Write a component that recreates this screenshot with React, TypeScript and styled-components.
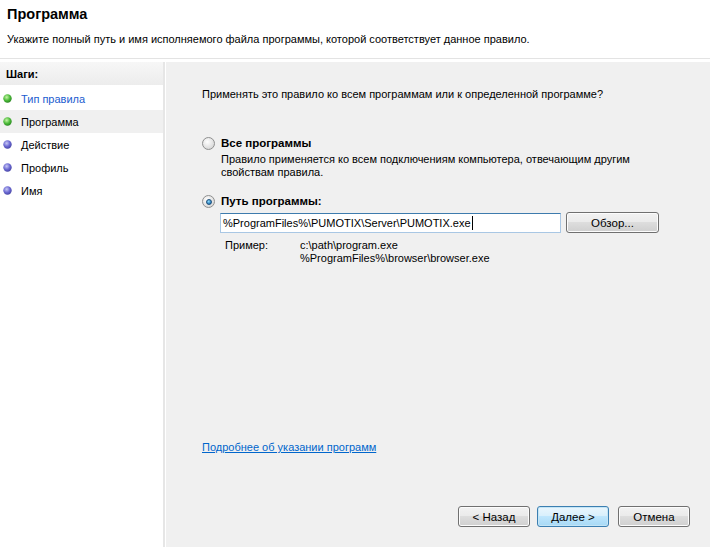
import styled, { createGlobalStyle } from "styled-components";

const GlobalStyle = createGlobalStyle`
  html, body {
    margin: 0;
    padding: 0;
    background: #fff;
  }
  body {
    font-family: "Liberation Sans", Arial, sans-serif;
    font-size: 11px;
    color: #000;
  }
`;

const Window = styled.div`
  width: 710px;
  height: 547px;
  display: flex;
  flex-direction: column;
  background: #fff;
  overflow: hidden;
`;

const Header = styled.div`
  height: 59px;
  padding: 0 7px;
  border-bottom: 1px solid #e3e3e3;
  box-sizing: border-box;
`;

const Title = styled.div`
  font-weight: bold;
  font-size: 14.5px;
  padding-top: 6px;
  line-height: 17px;
`;

const Subtitle = styled.div`
  margin-top: 9px;
  line-height: 14px;
`;

const Body = styled.div`
  flex: 1;
  display: flex;
  padding-top: 3px;
  background: #fff;
  min-height: 0;
`;

const StepsPane = styled.div`
  width: 163px;
  flex-shrink: 0;
  border-right: 2px solid #e6e6e6;
  background: #fff;
`;

const StepsHeader = styled.div`
  height: 23px;
  display: flex;
  align-items: center;
  padding-left: 6px;
  font-weight: bold;
  background: linear-gradient(#f7f7f7, #ececec);
  margin-bottom: 2px;
`;

const StepItem = styled.div<{ $active?: boolean; $link?: boolean }>`
  height: 23px;
  display: flex;
  align-items: center;
  padding-left: 3px;
  gap: 9px;
  background: ${(p) => (p.$active ? "#f0f0f0" : "transparent")};
  color: ${(p) => (p.$link ? "#1c5ccf" : "#000")};
`;

const ContentPane = styled.div`
  flex: 1;
  min-width: 0;
  margin-left: 1px;
  background: #f0f0f0;
  display: flex;
  flex-direction: column;
  padding-left: 36px;
  padding-right: 20px;
`;

const Question = styled.div`
  margin-top: 26px;
  line-height: 13px;
  white-space: nowrap;
`;

const Option = styled.div<{ $gap: number }>`
  display: flex;
  flex-direction: column;
  margin-top: ${(p) => p.$gap}px;
`;

const OptionRow = styled.label`
  display: flex;
  align-items: center;
  gap: 6px;
  line-height: 13px;
  font-weight: bold;
  font-size: 11.5px;
`;

const OptionDesc = styled.div`
  margin-left: 19px;
  margin-top: 3px;
  line-height: 13px;
  width: 480px;
`;

const Radio = styled.span<{ $checked?: boolean }>`
  width: 13px;
  height: 13px;
  border-radius: 50%;
  border: 1px solid #8e8f8f;
  background: radial-gradient(circle at 40% 35%, #ffffff, #d4d4d4 85%);
  display: flex;
  align-items: center;
  justify-content: center;
  box-sizing: border-box;
  flex-shrink: 0;
  &::after {
    content: "";
    display: ${(p) => (p.$checked ? "block" : "none")};
    width: 6px;
    height: 6px;
    border-radius: 50%;
    background: radial-gradient(circle at 40% 35%, #8fdcff, #1a6fb0 80%);
    border: 1px solid #1d4f7a;
    box-sizing: border-box;
  }
`;

const PathRow = styled.div`
  display: flex;
  align-items: center;
  gap: 5px;
  margin-left: 18px;
  margin-top: 4px;
`;

const PathInput = styled.div`
  width: 341px;
  height: 20px;
  box-sizing: border-box;
  background: #fff;
  border: 1px solid #a9c7e4;
  border-top-color: #3d7bad;
  display: flex;
  align-items: center;
  padding-left: 2px;
  white-space: nowrap;
`;

const Caret = styled.span`
  display: inline-block;
  width: 1px;
  height: 14px;
  background: #000;
  margin-left: 1px;
`;

const Button = styled.div<{ $default?: boolean; $width?: number }>`
  width: ${(p) => p.$width ?? 72}px;
  height: 21px;
  box-sizing: border-box;
  border: 1px solid ${(p) => (p.$default ? "#3c7fb1" : "#707070")};
  border-radius: 3px;
  background: ${(p) =>
    p.$default
      ? "linear-gradient(#eaf6fd 0%, #d9f0fc 45%, #bee6fd 50%, #a7d9f5 100%)"
      : "linear-gradient(#f2f2f2 0%, #ebebeb 45%, #dddddd 50%, #cfcfcf 100%)"};
  box-shadow: inset 0 0 0 1px ${(p) => (p.$default ? "#c4e5f6" : "#fcfcfc")};
  display: flex;
  align-items: center;
  justify-content: center;
  font-size: 11.5px;
`;

const CancelButton = styled(Button)`
  margin-left: 2px;
`;

const ExampleRow = styled.div`
  display: grid;
  grid-template-columns: 75px auto;
  margin-left: 23px;
  margin-top: 6px;
  line-height: 13px;
`;

const HelpLink = styled.a`
  margin-top: auto;
  color: #0066cc;
  text-decoration: underline;
  line-height: 13px;
  align-self: flex-start;
  cursor: pointer;
`;

const Footer = styled.div`
  display: flex;
  justify-content: flex-end;
  gap: 7px;
  margin-top: 52px;
  margin-bottom: 20px;
`;

const Bullet = ({ done }: { done: boolean }) => {
  const id = done ? "bg" : "bp";
  return (
    <svg width="9" height="9" viewBox="0 0 9 9">
      <defs>
        <radialGradient id={id} cx="0.4" cy="0.35" r="0.65">
          <stop offset="0" stopColor={done ? "#c8f5a8" : "#c9c9f5"} />
          <stop offset="0.6" stopColor={done ? "#4cbb3a" : "#6a68d2"} />
          <stop offset="1" stopColor={done ? "#2c8a22" : "#4a48a8"} />
        </radialGradient>
      </defs>
      <circle cx="4.5" cy="4.5" r="4.2" fill={`url(#${id})`} />
    </svg>
  );
};

const steps = [
  { label: "Тип правила", done: true, link: true },
  { label: "Программа", done: true, active: true },
  { label: "Действие", done: false },
  { label: "Профиль", done: false },
  { label: "Имя", done: false },
];

export default function App() {
  return (
    <>
      <GlobalStyle />
      <Window>
        <Header>
          <Title>Программа</Title>
          <Subtitle>
            Укажите полный путь и имя исполняемого файла программы, которой
            соответствует данное правило.
          </Subtitle>
        </Header>
        <Body>
          <StepsPane>
            <StepsHeader>Шаги:</StepsHeader>
            {steps.map((s) => (
              <StepItem key={s.label} $active={s.active} $link={s.link}>
                <Bullet done={s.done} />
                {s.label}
              </StepItem>
            ))}
          </StepsPane>
          <ContentPane>
            <Question>
              Применять это правило ко всем программам или к определенной
              программе?
            </Question>
            <Option $gap={36}>
              <OptionRow>
                <Radio />
                Все программы
              </OptionRow>
              <OptionDesc>
                Правило применяется ко всем подключениям компьютера, отвечающим
                другим
                <br />
                свойствам правила.
              </OptionDesc>
            </Option>
            <Option $gap={16}>
              <OptionRow>
                <Radio $checked />
                Путь программы:
              </OptionRow>
              <PathRow>
                <PathInput>
                  %ProgramFiles%\PUMOTIX\Server\PUMOTIX.exe
                  <Caret />
                </PathInput>
                <Button $width={93}>Обзор...</Button>
              </PathRow>
              <ExampleRow>
                <span>Пример:</span>
                <span>
                  c:\path\program.exe
                  <br />
                  %ProgramFiles%\browser\browser.exe
                </span>
              </ExampleRow>
            </Option>
            <HelpLink>Подробнее об указании программ</HelpLink>
            <Footer>
              <Button>&lt; Назад</Button>
              <Button $default>Далее &gt;</Button>
              <CancelButton>Отмена</CancelButton>
            </Footer>
          </ContentPane>
        </Body>
      </Window>
    </>
  );
}
